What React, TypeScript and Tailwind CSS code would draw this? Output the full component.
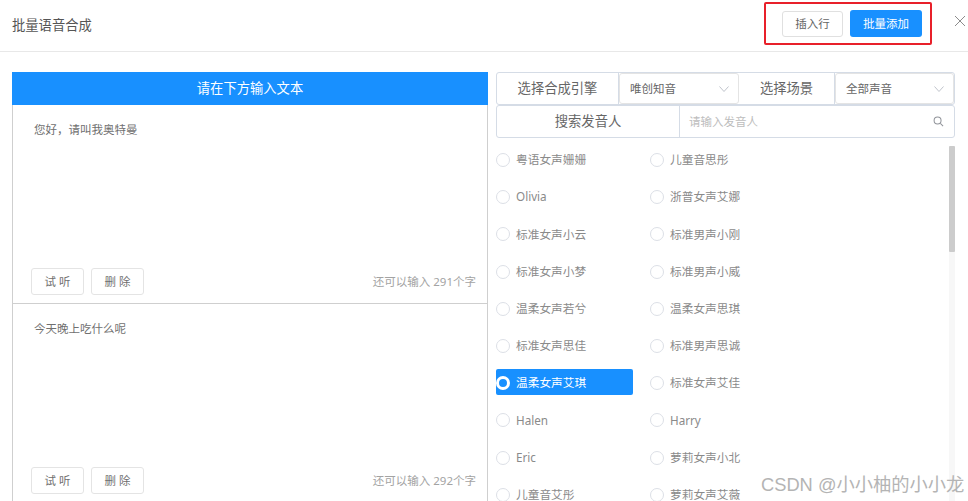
const voices = [
  ['粤语女声姗姗', '儿童音思彤'],
  ['Olivia', '浙普女声艾娜'],
  ['标准女声小云', '标准男声小刚'],
  ['标准女声小梦', '标准男声小威'],
  ['温柔女声若兮', '温柔女声思琪'],
  ['标准女声思佳', '标准男声思诚'],
  ['温柔女声艾琪', '标准女声艾佳'],
  ['Halen', 'Harry'],
  ['Eric', '萝莉女声小北'],
  ['儿童音艾彤', '萝莉女声艾薇'],
];

function Chevron() {
  return (
    <svg width="12" height="12" viewBox="0 0 12 12" fill="none" stroke="#c0c4cc" strokeWidth="1">
      <path d="M1.5 3.5 L6 8.5 L10.5 3.5" />
    </svg>
  );
}

function Radio({ label, active }: { label: string; active?: boolean }) {
  return (
    <div className={`flex items-center h-[26px] w-[137px] rounded-[2px] pt-[2px] ${active ? 'bg-[#1890ff] text-white' : 'text-[#8a8a8a]'}`}>
      {active ? (
        <span className="w-[14px] h-[14px] rounded-full border-[3px] border-white mr-[6px] shrink-0" />
      ) : (
        <span className="w-[14px] h-[14px] rounded-full border border-[#dcdfe6] bg-white mr-[6px] shrink-0" />
      )}
      <span className="text-[11.7px] whitespace-nowrap">{label}</span>
    </div>
  );
}

function TextBlock({ text, count }: { text: string; count: number }) {
  return (
    <div className="flex flex-col justify-between h-[199px] pl-[18px] pr-[11px] pt-[17px] pb-[8px] border-b border-[#cfcfcf]">
      <p className="text-[11.5px] text-[#707070] leading-[16px] ml-[3px]">{text}</p>
      <div className="flex items-center justify-between">
        <div className="flex gap-[7px]">
          <button className="w-[53px] h-[27px] rounded-[3px] border border-[#e4e4e4] text-[11.5px] text-[#707070]">试 听</button>
          <button className="w-[53px] h-[27px] rounded-[3px] border border-[#e4e4e4] text-[11.5px] text-[#707070]">删 除</button>
        </div>
        <span className="text-[11.5px] text-[#a3a3a3]">还可以输入 {count}个字</span>
      </div>
    </div>
  );
}

export default function App() {
  return (
    <div className="relative w-[968px] h-[501px] overflow-hidden bg-white">
      <div className="h-full flex flex-col font-['Noto_Sans','Noto_Sans_CJK_SC',sans-serif]">
        {/* Header */}
        <div className="flex items-center justify-between h-[52px] shrink-0 border-b border-[#e8e8e8] pl-[12px] pr-[2px]">
          <span className="text-[13.3px] text-[#555]">批量语音合成</span>
          <div className="flex items-center">
            <div className="flex items-center gap-[7px] h-[43px] pl-[16px] pr-[8px] border-[2px] border-[#e8202a] rounded-[2px] mr-[22px] mt-[-4px]">
              <button className="w-[61px] h-[26px] rounded-[3px] border border-[#e0e0e0] text-[11.5px] text-[#666]">插入行</button>
              <button className="w-[72px] h-[27px] rounded-[3px] bg-[#1890ff] text-[11.5px] text-white">批量添加</button>
            </div>
            <svg width="12" height="12" viewBox="0 0 12 12" stroke="#8c8c8c" strokeWidth="1" className="mb-[10px]">
              <path d="M1 1 L11 11 M11 1 L1 11" />
            </svg>
          </div>
        </div>

        {/* Body */}
        <div className="flex pt-[20px] pl-[12px] flex-1 min-h-0">
          {/* Left */}
          <div className="w-[476px] shrink-0 flex flex-col">
            <div className="h-[33px] bg-[#1890ff] text-white text-[13.3px] flex items-center justify-center shrink-0">请在下方输入文本</div>
            <div className="border-x border-[#cfcfcf] flex-1">
              <TextBlock text="您好，请叫我奥特曼" count={291} />
              <TextBlock text="今天晚上吃什么呢" count={292} />
            </div>
          </div>

          {/* Right */}
          <div className="ml-[8px] w-[459px] shrink-0 flex flex-col">
            <div className="flex h-[33px] border border-[#d5dce6] rounded-[3px] text-[#666] shrink-0">
              <div className="w-[122px] flex items-center justify-center text-[13.3px] border-r border-[#d5dce6]">选择合成引擎</div>
              <div className="w-[120px] flex items-center justify-between pl-[10px] pr-[8px] text-[11.5px] border border-[#e4e4e4] rounded-[3px]">
                唯创知音<Chevron />
              </div>
              <div className="w-[96px] flex items-center justify-center text-[13.3px] border-r border-[#d5dce6]">选择场景</div>
              <div className="flex-1 flex items-center justify-between pl-[10px] pr-[8px] text-[11.5px] border border-[#e4e4e4] rounded-[3px]">
                全部声音<Chevron />
              </div>
            </div>
            <div className="flex h-[33px] border border-[#d5dce6] rounded-[3px] shrink-0">
              <div className="w-[183px] flex items-center justify-center text-[13.3px] text-[#666] border-r border-[#d5dce6]">搜索发音人</div>
              <div className="flex-1 flex items-center justify-between pl-[9px] pr-[10px] text-[11.5px] text-[#bdbdbd]">
                请输入发音人
                <svg width="11" height="11" viewBox="0 0 12 12" fill="none" stroke="#909399" strokeWidth="1.1">
                  <circle cx="5" cy="5" r="3.8" />
                  <path d="M8 8 L11 11" />
                </svg>
              </div>
            </div>

            <div className="relative flex-1 min-h-0 overflow-hidden mt-[8px]">
              <div className="flex flex-col gap-[11.2px]">
                {voices.map((row) => (
                  <div key={row[0]} className="flex gap-[17px]">
                    <Radio label={row[0]} active={row[0] === '温柔女声艾琪'} />
                    <Radio label={row[1]} />
                  </div>
                ))}
              </div>
              <div className="absolute top-0 bottom-0 right-0 w-[6px] bg-[#f7f7f7]">
                <div className="h-[106px] bg-[#cccccc] rounded-[1px]" />
              </div>
            </div>
          </div>
        </div>
      </div>

      {/* Watermark */}
      <span className="absolute left-[761px] top-[471px] text-[18.3px] text-[#b4b4b4] whitespace-nowrap font-['Liberation_Sans','Noto_Sans_CJK_SC',sans-serif]">CSDN @小小柚的小小龙</span>
    </div>
  );
}
